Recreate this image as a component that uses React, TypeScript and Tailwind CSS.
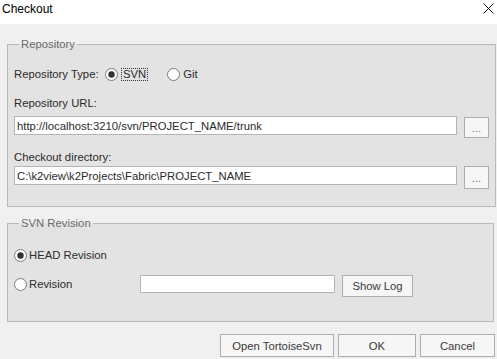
import React from "react";

function Radio({ checked }: { checked?: boolean }) {
  return (
    <svg width="13" height="13" viewBox="0 0 13 13" className="shrink-0">
      <circle cx="6.5" cy="6.5" r="6" fill="#ffffff" stroke="#7a7a7a" strokeWidth="1" />
      {checked && <circle cx="6.5" cy="6.5" r="3.2" fill="#333333" />}
    </svg>
  );
}

function Btn({ label, className }: { label: string; className: string }) {
  return (
    <div
      className={
        "flex items-center justify-center border border-[#adadad] bg-[#f6f6f6] text-[11.3px] text-[#3a3a3a] " +
        className
      }
    >
      {label}
    </div>
  );
}

export default function App() {
  return (
    <div
      className="w-[497px] h-[359px] overflow-hidden bg-[#f0f0f0] text-[#2b2b2b] text-[11.3px] leading-[14px]"
      style={{ fontFamily: '"Liberation Sans", Arial, sans-serif' }}
    >
      {/* title bar */}
      <div className="h-[24px] bg-white flex items-start justify-between pl-[2px] pr-[3px] pt-[2px]">
        <span className="text-[12px] leading-[14px] text-black">Checkout</span>
        <svg width="11" height="11" viewBox="0 0 11 11" className="mt-[1px]">
          <path d="M0.5 0.5 L10.5 10.5 M10.5 0.5 L0.5 10.5" stroke="#111" strokeWidth="1" />
        </svg>
      </div>

      <div className="px-[7px]">
        {/* Repository group */}
        <fieldset className="mt-[13px] h-[170px] w-[487px] border border-[#b9b9b9] bg-[#e3e3e3] px-[6px]">
          <legend className="ml-[5px] px-[2px] text-[#6b6b6b]">Repository</legend>
          <div className="flex items-center h-[20px] mt-[13px]">
            <span className="w-[91px]">Repository Type:</span>
            <Radio checked />
            <span className="ml-[3px] px-[1px] border border-dotted border-[#333] leading-[11px] h-[13px]">SVN</span>
            <span className="ml-[19px]"><Radio /></span>
            <span className="ml-[3px]">Git</span>
          </div>
          <div className="mt-[12px]">Repository URL:</div>
          <div className="flex items-start mt-[6px]">
            <div className="w-[443px] h-[19px] bg-white border border-[#b5b5b5] flex items-center pl-[2px]">
              http://localhost:3210/svn/PROJECT_NAME/trunk
            </div>
            <Btn label="..." className="ml-[7px] mt-[1px] w-[25px] h-[21px] bg-[#f3f3f3] text-[#777]" />
          </div>
          <div className="mt-[12px]">Checkout directory:</div>
          <div className="flex items-start mt-[2px]">
            <div className="w-[443px] h-[19px] bg-white border border-[#b5b5b5] flex items-center pl-[2px]">
              C:\k2view\k2Projects\Fabric\PROJECT_NAME
            </div>
            <Btn label="..." className="ml-[7px] w-[25px] h-[23px] bg-[#f3f3f3] text-[#777]" />
          </div>
        </fieldset>

        {/* SVN Revision group */}
        <fieldset className="mt-[9px] h-[106px] w-[487px] border border-[#b9b9b9] bg-[#e3e3e3] px-[6px]">
          <legend className="ml-[5px] px-[2px] text-[#6b6b6b]">SVN Revision</legend>
          <div className="flex items-center h-[16px] mt-[17px]">
            <Radio checked />
            <span className="ml-[2px]">HEAD Revision</span>
          </div>
          <div className="flex items-start mt-[12px]">
            <div className="flex items-center h-[18px] w-[126px]">
              <Radio />
              <span className="ml-[2px]">Revision</span>
            </div>
            <div className="w-[195px] h-[18px] bg-white border border-[#b5b5b5]" />
            <Btn label="Show Log" className="ml-[7px] w-[71px] h-[22px]" />
          </div>
        </fieldset>

        {/* bottom buttons */}
        <div className="flex justify-end mt-[12px] gap-[4px] -mr-[5px]">
          <Btn label="Open TortoiseSvn" className="w-[114px] h-[23px]" />
          <Btn label="OK" className="w-[78px] h-[23px]" />
          <Btn label="Cancel" className="w-[75px] h-[23px]" />
        </div>
      </div>
    </div>
  );
}
